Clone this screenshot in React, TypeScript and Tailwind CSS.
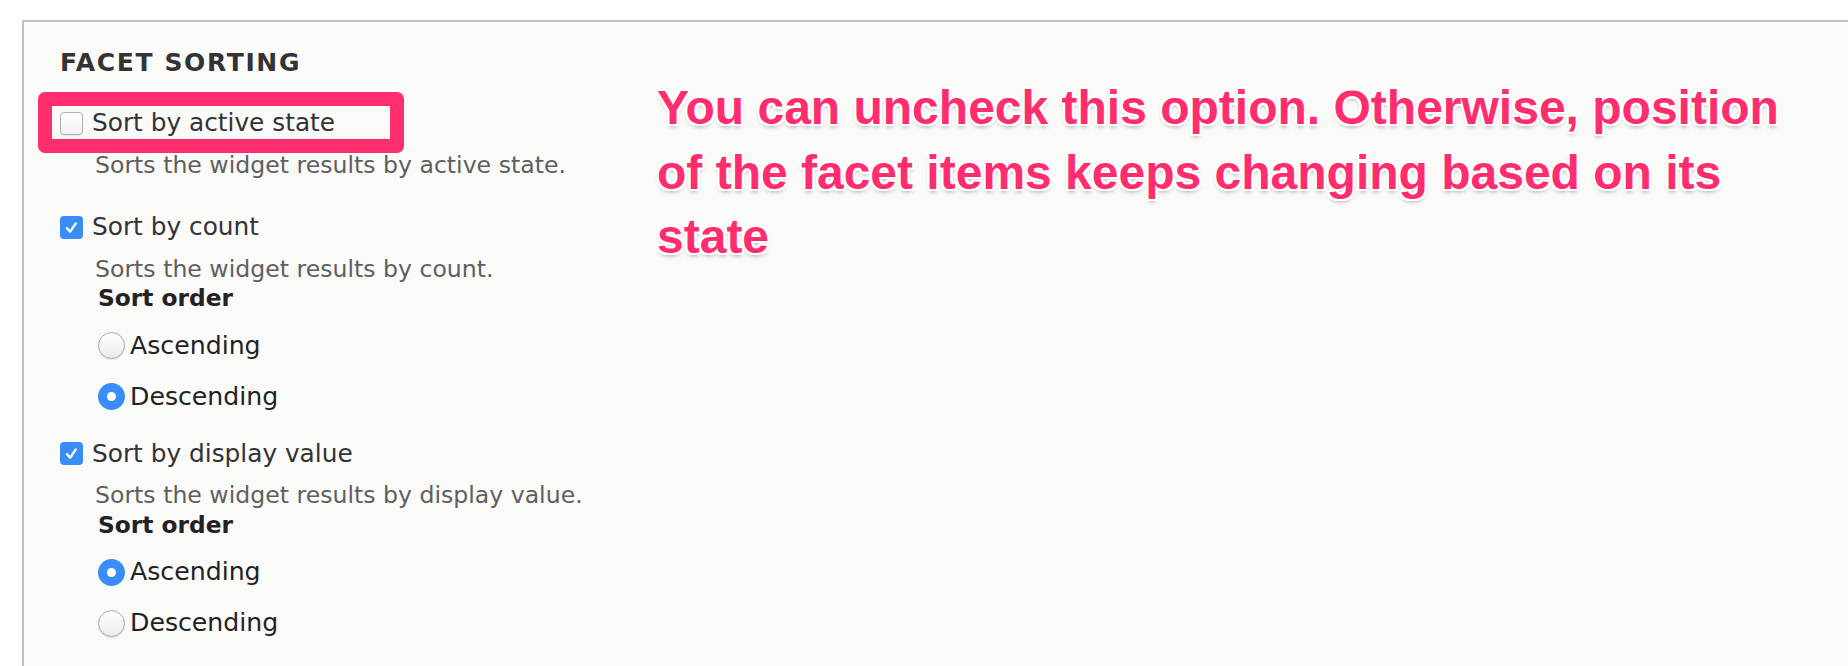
import React from "react";

type Item = {
  label: string;
  checked: boolean;
  desc: string;
  order: "asc" | "desc" | null;
  gap: string;
};

const items: Item[] = [
  { label: "Sort by active state", checked: false, desc: "Sorts the widget results by active state.", order: null, gap: "mt-[32.5px]" },
  { label: "Sort by count", checked: true, desc: "Sorts the widget results by count.", order: "desc", gap: "mt-[33.5px]" },
  { label: "Sort by display value", checked: true, desc: "Sorts the widget results by display value.", order: "asc", gap: "mt-[29px]" },
  { label: "Sort by raw value", checked: true, desc: "Sorts the widget results by raw value.", order: "asc", gap: "mt-[26.5px]" },
];

function Checkbox({ checked }: { checked: boolean }) {
  if (checked) {
    return (
      <span className="flex h-[23px] w-[23px] shrink-0 items-center justify-center rounded-[4px] bg-[#3a8cf6]">
        <svg width="23" height="23" viewBox="0 0 23 23">
          <path d="M7 12.2 L10.2 15.6 L15.8 7.4" fill="none" stroke="#fff" strokeWidth="2.4" strokeLinecap="round" strokeLinejoin="round" />
        </svg>
      </span>
    );
  }
  return (
    <span className="block h-[23px] w-[23px] shrink-0 rounded-[4px] border border-[#b0b0b0] bg-linear-to-b from-white to-[#f1f1f1] shadow-[0_1px_1px_rgba(0,0,0,0.08)]" />
  );
}

function Radio({ checked }: { checked: boolean }) {
  if (checked) {
    return (
      <span className="flex h-[27px] w-[27px] shrink-0 items-center justify-center rounded-full bg-[#3a8df7]">
        <span className="block h-[9px] w-[9px] rounded-full bg-white" />
      </span>
    );
  }
  return (
    <span className="block h-[27px] w-[27px] shrink-0 rounded-full border border-[#aaaaaa] bg-linear-to-b from-white to-[#ebebeb] shadow-[0_1px_1px_rgba(0,0,0,0.12)]" />
  );
}

function SortItem({ item }: { item: Item }) {
  return (
    <div className={item.gap}>
      <div className="flex h-[28px] items-center gap-[9px] text-[24.8px] text-[#333]">
        <Checkbox checked={item.checked} />
        <span className="whitespace-nowrap">{item.label}</span>
      </div>
      <div className="mt-[14.5px] flex h-[28px] items-center pl-[35px] text-[23.6px] text-[#5f5f5f] whitespace-nowrap">
        {item.desc}
      </div>
      {item.order && (
        <>
          <div className="mt-[1px] flex h-[28px] items-center pl-[38px] text-[23.3px] font-bold text-[#222]">Sort order</div>
          <div className="mt-[19px] flex h-[28px] items-center gap-[5px] pl-[38px] text-[25.2px] text-[#222]">
            <Radio checked={item.order === "asc"} />
            <span>Ascending</span>
          </div>
          <div className="mt-[23px] flex h-[28px] items-center gap-[5px] pl-[38px] text-[25.2px] text-[#222]">
            <Radio checked={item.order === "desc"} />
            <span>Descending</span>
          </div>
        </>
      )}
    </div>
  );
}

export default function App() {
  return (
    <div className="relative h-[666px] w-[1848px] overflow-hidden bg-white font-['DejaVu_Sans',sans-serif]">
      <div className="ml-[22px] mt-[20px] h-[800px] w-[1900px] border-2 border-[#c2c2c2] bg-[#fafaf9] pl-[36px] pt-[26.5px]">
        <div className="flex h-[28px] items-center text-[25px] font-bold uppercase tracking-[0.065em] text-[#333]">
          Facet sorting
        </div>
        {items.map((item) => (
          <SortItem key={item.label} item={item} />
        ))}
      </div>

      {/* annotation */}
      <div className="absolute left-[38px] top-[92px] h-[61px] w-[366px] rounded-[7px] border-[14px] border-[#ff2d6e]" />
      <div className="absolute left-[657px] top-[76px] font-['Liberation_Sans',Arial,sans-serif] text-[48px] font-bold leading-[64.5px] text-[#ff2d6e] [text-shadow:2px_0_0_#fff,-2px_0_0_#fff,0_2px_0_#fff,0_-2px_0_#fff,2px_2px_0_#fff,-2px_-2px_0_#fff,2px_-2px_0_#fff,-2px_2px_0_#fff,0_3px_4px_rgba(0,0,0,0.3)]">
        <div className="whitespace-nowrap">You can uncheck this option. Otherwise, position</div>
        <div className="whitespace-nowrap">of the facet items keeps changing based on its</div>
        <div className="whitespace-nowrap">state</div>
      </div>
    </div>
  );
}
